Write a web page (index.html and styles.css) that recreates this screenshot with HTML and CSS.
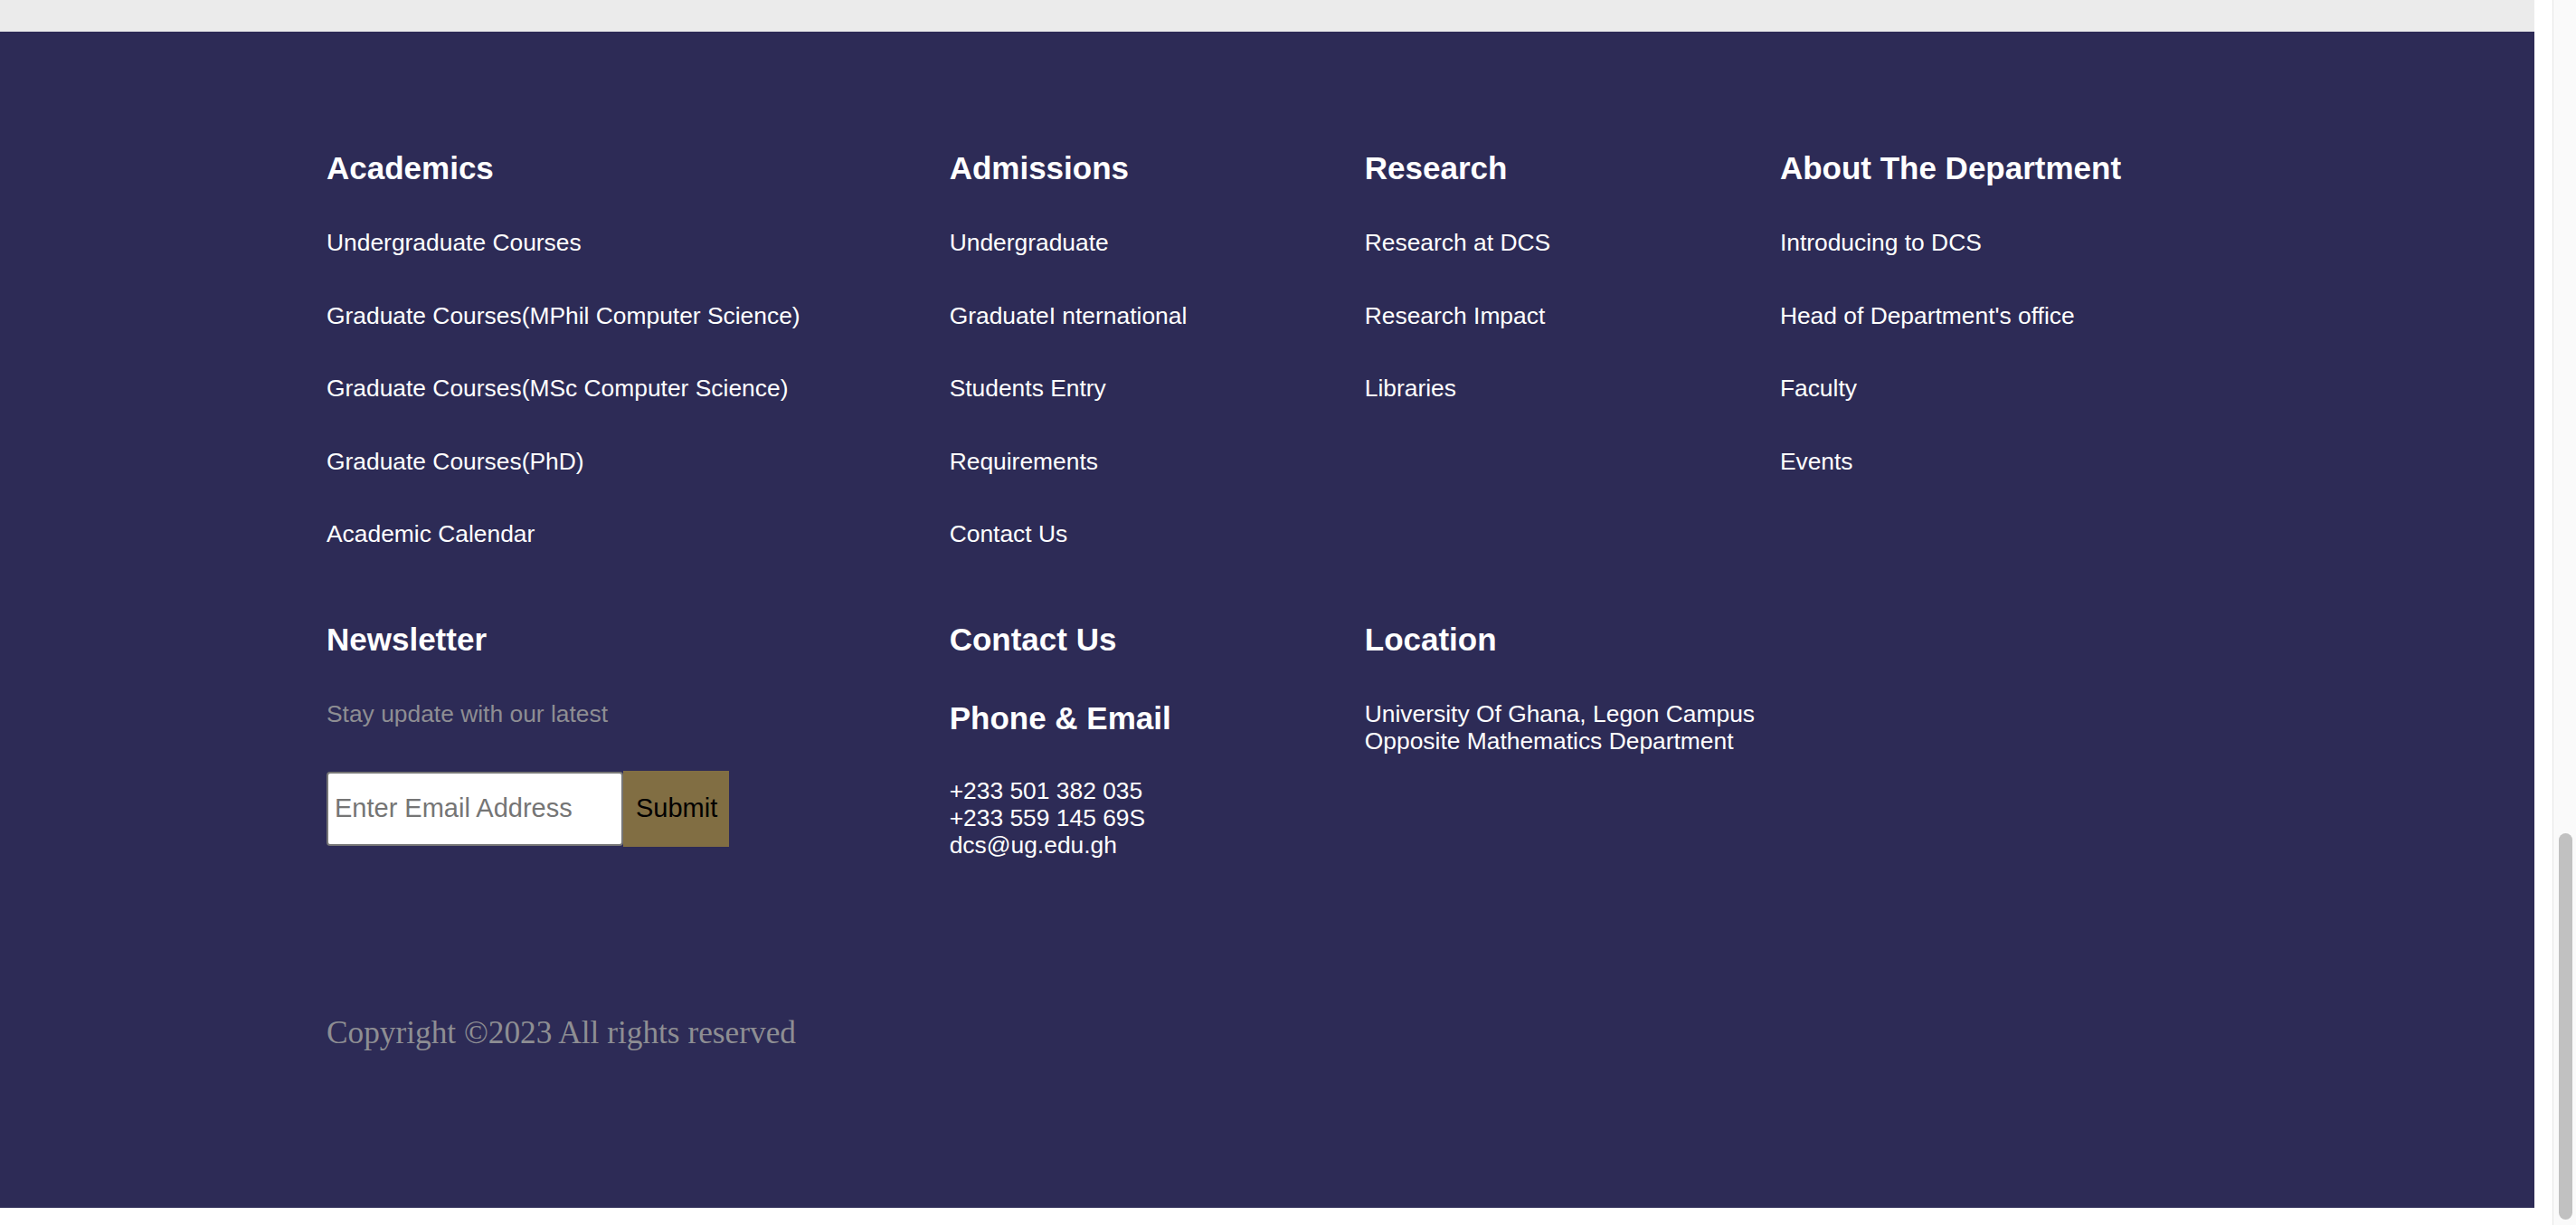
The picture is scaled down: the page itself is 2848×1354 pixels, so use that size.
FILE: index.html
```html
<!DOCTYPE html>
<html lang="en">
<head>
<meta charset="utf-8">
<title>Footer</title>
<link rel="stylesheet" href="styles.css">
</head>
<body>
<div class="viewport">
  <div class="page">
    <div class="top-band"></div>
    <footer class="footer">
      <div class="footer-grid">
        <div class="col">
          <h3 class="col-title">Academics</h3>
          <ul class="links">
            <li><a href="#">Undergraduate Courses</a></li>
            <li><a href="#">Graduate Courses(MPhil Computer Science)</a></li>
            <li><a href="#">Graduate Courses(MSc Computer Science)</a></li>
            <li><a href="#">Graduate Courses(PhD)</a></li>
            <li><a href="#">Academic Calendar</a></li>
          </ul>
        </div>
        <div class="col">
          <h3 class="col-title">Admissions</h3>
          <ul class="links">
            <li><a href="#">Undergraduate</a></li>
            <li><a href="#">GraduateI nternational</a></li>
            <li><a href="#">Students Entry</a></li>
            <li><a href="#">Requirements</a></li>
            <li><a href="#">Contact Us</a></li>
          </ul>
        </div>
        <div class="col">
          <h3 class="col-title">Research</h3>
          <ul class="links">
            <li><a href="#">Research at DCS</a></li>
            <li><a href="#">Research Impact</a></li>
            <li><a href="#">Libraries</a></li>
          </ul>
        </div>
        <div class="col">
          <h3 class="col-title">About The Department</h3>
          <ul class="links">
            <li><a href="#">Introducing to DCS</a></li>
            <li><a href="#">Head of Department's office</a></li>
            <li><a href="#">Faculty</a></li>
            <li><a href="#">Events</a></li>
          </ul>
        </div>

        <div class="col">
          <h3 class="col-title">Newsletter</h3>
          <p class="muted">Stay update with our latest</p>
          <form class="subscribe">
            <input class="email" type="email" placeholder="Enter Email Address">
            <button class="submit" type="button">Submit</button>
          </form>
        </div>
        <div class="col">
          <h3 class="col-title">Contact Us</h3>
          <h3 class="col-title sub">Phone &amp; Email</h3>
          <div class="info">
            <div>+233 501 382 035</div>
            <div>+233 559 145 69S</div>
            <div>dcs@ug.edu.gh</div>
          </div>
        </div>
        <div class="col">
          <h3 class="col-title">Location</h3>
          <div class="info">
            <div>University Of Ghana, Legon Campus</div>
            <div>Opposite Mathematics Department</div>
          </div>
        </div>
        <div class="col"></div>
      </div>
      <p class="copyright">Copyright ©2023 All rights reserved</p>
    </footer>
  </div>
  <div class="scrollbar">
    <div class="thumb"></div>
  </div>
</div>
</body>
</html>
```

FILE: styles.css
```css
html, body {
  margin: 0;
  padding: 0;
  height: 1354px;
  overflow: hidden;
  background: #ffffff;
}

.viewport {
  display: flex;
  height: 1354px;
}

.page {
  flex: 1;
  background: #ffffff;
}

.top-band {
  width: 2802px;
  height: 35px;
  background: #ebebeb;
}

.footer {
  width: 2802px;
  box-sizing: border-box;
  height: 1300px;
  background: #2d2b56;
  padding: 131px 0 0 361px;
  font-family: "Liberation Sans", Arial, Helvetica, sans-serif;
  color: #ffffff;
}

.footer-grid {
  width: 2066px;
  display: grid;
  grid-template-columns: 1.5fr 1fr 1fr 1fr;
  row-gap: 31px;
}

.col-title {
  margin: 0 0 48px;
  font-size: 35px;
  line-height: 39px;
  font-weight: bold;
  color: #ffffff;
}

.col-title.sub {
  margin-bottom: 46px;
}

.links {
  list-style: none;
  margin: 0;
  padding: 0;
}

.links li {
  font-size: 26.4px;
  line-height: 30px;
  margin-bottom: 50.5px;
}

.links a {
  color: #ffffff;
  text-decoration: none;
}

.muted {
  margin: 0 0 48px;
  font-size: 26.4px;
  line-height: 30px;
  color: #8e8e93;
}

.subscribe {
  display: flex;
  align-items: center;
  margin: 0;
}

.email {
  box-sizing: border-box;
  width: 328px;
  height: 82px;
  margin: 0;
  padding: 0 0 0 7px;
  border: 2px solid #767676;
  border-radius: 4px;
  background: #ffffff;
  font-family: "Liberation Sans", Arial, Helvetica, sans-serif;
  font-size: 29px;
  color: #000000;
}

.email::placeholder {
  color: #757575;
}

.submit {
  height: 84px;
  margin: 0;
  padding: 0 13px 0 14px;
  border: none;
  background: #816e43;
  font-family: "Liberation Sans", Arial, Helvetica, sans-serif;
  font-size: 29px;
  color: #000000;
}

.info {
  font-size: 26.4px;
  line-height: 30px;
  color: #ffffff;
}

.copyright {
  margin: 173px 0 0;
  font-family: "Liberation Serif", "Times New Roman", serif;
  font-size: 35.3px;
  line-height: 40px;
  color: #8e8e93;
}

.scrollbar {
  width: 26px;
  box-sizing: border-box;
  height: 1354px;
  background: #fafafa;
  border-left: 1px solid #e6e6e6;
  padding: 921px 0 0 6px;
}

.thumb {
  width: 15px;
  height: 427px;
  border-radius: 8px;
  background: #c1c1c1;
}
```
